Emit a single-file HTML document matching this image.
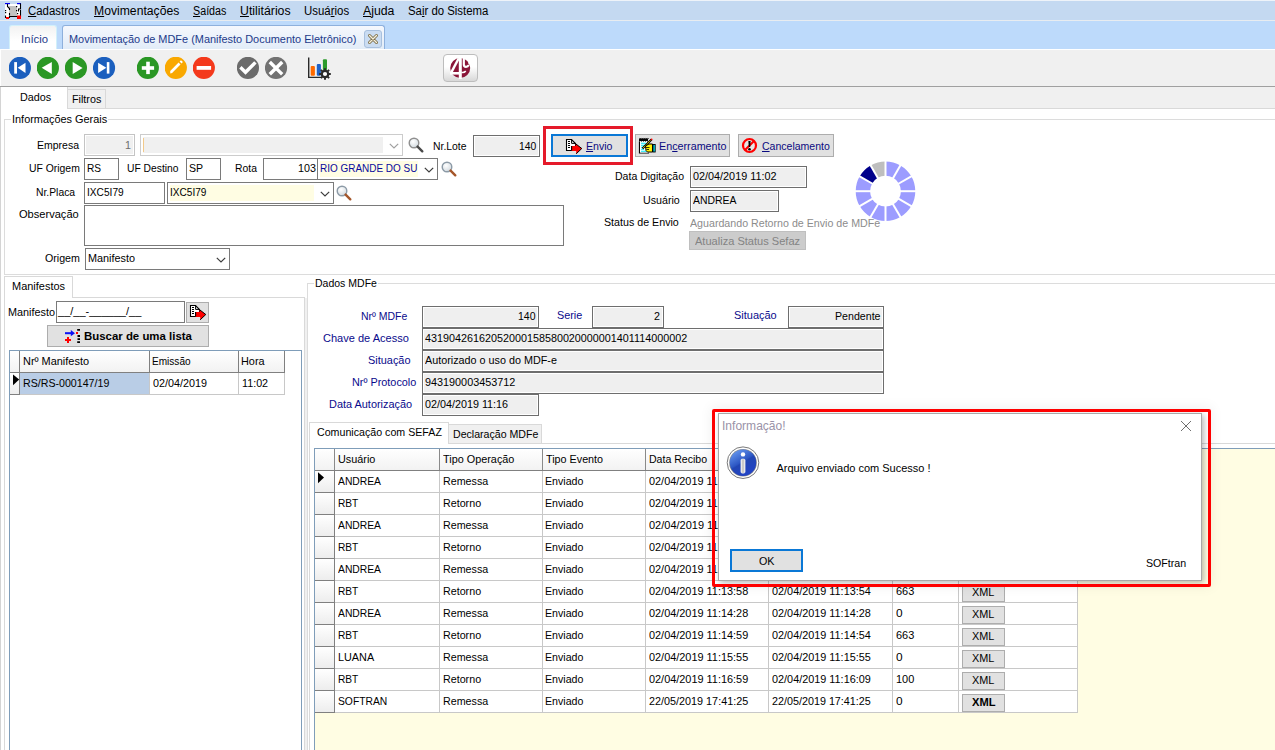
<!DOCTYPE html>
<html><head><meta charset="utf-8"><style>
html,body{margin:0;padding:0;}
body{width:1275px;height:750px;overflow:hidden;position:relative;background:#fff;font-family:"Liberation Sans",sans-serif;}
body>div,body>svg{position:absolute;}
.t{white-space:nowrap;}
</style></head><body>
<div style="left:0px;top:0px;width:1275px;height:750px;background:#fff"></div>
<div style="left:0px;top:0px;width:1275px;height:20px;background:#C4D9F1"></div>
<div style="left:0px;top:0px;width:1275px;height:1px;background:#EEF3F9"></div>
<div style="left:0px;top:20px;width:1275px;height:1px;background:#E8ECF0"></div>
<div style="left:0px;top:21px;width:1275px;height:28px;background:#BDDAFB"></div>
<div style="left:0px;top:49px;width:1275px;height:37px;background:#F0F0F0"></div>
<div style="left:0px;top:49px;width:1275px;height:1px;background:#fff"></div>
<div style="left:0px;top:50px;width:1px;height:36px;background:#fff"></div>
<div style="left:0px;top:86px;width:1275px;height:1px;background:#A0A0A0"></div>
<div style="left:0px;top:87px;width:1275px;height:21px;background:#F0F0F0"></div>
<svg style="position:absolute;left:0px;top:0px;" width="26" height="22" viewBox="0 0 26 22"><rect x="5" y="4" width="16" height="13" fill="#fff"/><rect x="9" y="6" width="8" height="10" fill="#C2C2C2"/><rect x="5" y="3" width="5" height="1.2" fill="#0000F0"/><rect x="17" y="3" width="4" height="1.2" fill="#0000F0"/><path d="M7.5 4 V6.5 L9.5 8.5 V10 M9.5 13 V15.5 M5.5 15.5 V17.5 H9.5 V16.5 H17 M20.5 3.5 V9 H18.5 V11.5 M20.5 10 V16.5 H17.5" stroke="#000" stroke-width="1.1" fill="none"/><rect x="5" y="10" width="1.2" height="1.2" fill="#000"/><rect x="5" y="12" width="1.2" height="1.2" fill="#000"/><rect x="16" y="6" width="1.2" height="1.2" fill="#000"/><rect x="16" y="10" width="1.2" height="1.2" fill="#000"/><rect x="17" y="13" width="1.2" height="1.2" fill="#000"/><rect x="6" y="17" width="3" height="2" fill="#f00"/><rect x="17" y="15.5" width="4" height="3.5" fill="#f00"/></svg>
<div class="t" style="left:27.90px;top:4.00px;font-size:12px;line-height:14px;color:#000;font-weight:normal;font-family:'Liberation Sans', sans-serif;transform:scaleX(0.9508);transform-origin:0 0;"><u>C</u>adastros</div>
<div class="t" style="left:93.60px;top:4.00px;font-size:12px;line-height:14px;color:#000;font-weight:normal;font-family:'Liberation Sans', sans-serif;transform:scaleX(1.0151);transform-origin:0 0;"><u>M</u>ovimentações</div>
<div class="t" style="left:192.60px;top:4.00px;font-size:12px;line-height:14px;color:#000;font-weight:normal;font-family:'Liberation Sans', sans-serif;transform:scaleX(0.8940);transform-origin:0 0;"><u>S</u>aídas</div>
<div class="t" style="left:239.70px;top:4.00px;font-size:12px;line-height:14px;color:#000;font-weight:normal;font-family:'Liberation Sans', sans-serif;transform:scaleX(1.0255);transform-origin:0 0;"><u>U</u>tilitários</div>
<div class="t" style="left:304.00px;top:4.00px;font-size:12px;line-height:14px;color:#000;font-weight:normal;font-family:'Liberation Sans', sans-serif;transform:scaleX(0.9525);transform-origin:0 0;">Usuá<u>r</u>ios</div>
<div class="t" style="left:362.80px;top:4.00px;font-size:12px;line-height:14px;color:#000;font-weight:normal;font-family:'Liberation Sans', sans-serif;transform:scaleX(1.0231);transform-origin:0 0;"><u>A</u>juda</div>
<div class="t" style="left:407.50px;top:4.00px;font-size:12px;line-height:14px;color:#000;font-weight:normal;font-family:'Liberation Sans', sans-serif;transform:scaleX(0.9480);transform-origin:0 0;">Sa<u>i</u>r do Sistema</div>
<div style="left:9px;top:25px;width:48px;height:24px;background:linear-gradient(#F2F2F2,#fff 65%);border:1px solid #D2F0FA;border-bottom:none;border-radius:3px 3px 0 0;box-sizing:border-box"></div>
<div class="t" style="left:20.50px;top:32.00px;font-size:11.5px;line-height:14px;color:#1D3A8A;font-weight:normal;font-family:'Liberation Sans', sans-serif;transform:scaleX(0.9823);transform-origin:0 0;">Início</div>
<div style="left:62px;top:25px;width:323px;height:24px;background:linear-gradient(#F5F8FD,#E2ECF8);border:1px solid #8EB0DC;border-bottom:none;border-radius:3px 3px 0 0;box-sizing:border-box"></div>
<div class="t" style="left:68.50px;top:32.00px;font-size:11.5px;line-height:14px;color:#1D3A8A;font-weight:normal;font-family:'Liberation Sans', sans-serif;transform:scaleX(0.9507);transform-origin:0 0;">Movimentação de MDFe (Manifesto Documento Eletrônico)</div>
<div style="left:364px;top:30px;width:18px;height:18px;background:#CADCF2;border:1px solid #A8C0DE;border-radius:3px;box-sizing:border-box"></div>
<svg style="position:absolute;left:367px;top:33px;" width="12" height="12" viewBox="0 0 12 12"><path d="M2.5 2.5 L9.5 9.5 M9.5 2.5 L2.5 9.5" stroke="#7A6A40" stroke-width="3" stroke-linecap="round"/><path d="M2.5 2.5 L9.5 9.5 M9.5 2.5 L2.5 9.5" stroke="#F4F0E0" stroke-width="1.4" stroke-linecap="round"/></svg>
<svg style="position:absolute;left:9px;top:57px;" width="23" height="23" viewBox="0 0 23 23"><circle cx="10.85" cy="10.9" r="11.1" fill="#1B5FBE"/><rect x="5.2" y="5.1" width="2.8" height="11.5" fill="#fff"/><path d="M16.5 5.8 L8.7 10.85 L16.5 15.9Z" fill="#fff"/></svg>
<svg style="position:absolute;left:37px;top:57px;" width="23" height="23" viewBox="0 0 23 23"><circle cx="10.85" cy="10.9" r="11.1" fill="#2A9724"/><path d="M14.8 4.9 L4.7 10.85 L14.8 16.9Z" fill="#fff"/></svg>
<svg style="position:absolute;left:65px;top:57px;" width="23" height="23" viewBox="0 0 23 23"><circle cx="10.9" cy="10.9" r="11.1" fill="#2A9724"/><path d="M7.7 4.9 L17.6 10.9 L7.7 16.9Z" fill="#fff"/></svg>
<svg style="position:absolute;left:93px;top:57px;" width="23" height="23" viewBox="0 0 23 23"><circle cx="11" cy="10.9" r="11.1" fill="#1B5FBE"/><path d="M5.1 5.8 L13.4 10.85 L5.1 15.9Z" fill="#fff"/><rect x="13.8" y="5.1" width="2.6" height="11.5" fill="#fff"/></svg>
<svg style="position:absolute;left:137px;top:57px;" width="23" height="23" viewBox="0 0 23 23"><circle cx="10.8" cy="10.8" r="11.1" fill="#2A9724"/><rect x="4.8" y="9.2" width="12.3" height="3.6" fill="#fff"/><rect x="9.2" y="4.7" width="3.6" height="12.4" fill="#fff"/></svg>
<svg style="position:absolute;left:165px;top:57px;" width="23" height="23" viewBox="0 0 23 23"><circle cx="10.8" cy="10.8" r="11.1" fill="#F9A800"/><path d="M5.3 16.5 L5.2 14 L13.6 5.6 L15.5 7.5 L7.1 15.9 Z" fill="#fff"/><path d="M14.6 4.6 L15.6 3.6 Q16.2 3.2 16.7 3.7 L17.5 4.5 Q17.9 5 17.5 5.5 L16.5 6.5Z" fill="#fff"/></svg>
<svg style="position:absolute;left:193px;top:57px;" width="23" height="23" viewBox="0 0 23 23"><circle cx="10.8" cy="10.8" r="11.1" fill="#F4391C"/><rect x="3.6" y="9" width="14.5" height="3.8" fill="#fff"/></svg>
<svg style="position:absolute;left:237px;top:57px;" width="23" height="23" viewBox="0 0 23 23"><circle cx="10.9" cy="10.9" r="11.1" fill="#6B6B6B"/><path d="M4.6 11.4 L8.5 15.3 L17.2 6.6" stroke="#fff" stroke-width="3.4" fill="none" stroke-linecap="square"/></svg>
<svg style="position:absolute;left:265px;top:57px;" width="23" height="23" viewBox="0 0 23 23"><circle cx="11" cy="10.9" r="11.1" fill="#727272"/><path d="M6 6.2 L16 16.1 M16 6.2 L6 16.1" stroke="#fff" stroke-width="3.4" stroke-linecap="square"/></svg>
<svg style="position:absolute;left:306px;top:55px;" width="28" height="27" viewBox="0 0 28 27"><path d="M2.7 2.5 V22.4 H15" stroke="#2A2A2A" stroke-width="1.4" fill="none"/><rect x="4.7" y="10.9" width="4.2" height="9.8" rx="1" fill="#FF6A00"/><rect x="10.8" y="9.1" width="4.1" height="11.6" rx="1" fill="#1F62C8"/><rect x="16.9" y="4.2" width="4.1" height="11" rx="1" fill="#2C9B2C"/><g transform="translate(19,19)"><circle r="4.3" fill="#2A2A2A"/><path d="M0 -5.8 V5.8 M-5.8 0 H5.8 M-4.1 -4.1 L4.1 4.1 M4.1 -4.1 L-4.1 4.1" stroke="#2A2A2A" stroke-width="2"/><circle r="2.1" fill="#fff"/></g></svg>
<div style="left:443px;top:54px;width:35px;height:28px;border:1px solid #BDBDBD;border-radius:4px;background:linear-gradient(#fff 0%,#fff 45%,#D8D8D8 100%);box-sizing:border-box"></div>
<svg style="position:absolute;left:450px;top:58px;" width="21" height="21" viewBox="0 0 21 21"><circle cx="10.2" cy="10" r="10" fill="#8A1538"/><path d="M1.2 14.6 L8.8 0.2" stroke="#fff" stroke-width="2.4"/><rect x="0" y="14" width="9.5" height="2.6" fill="#fff"/><rect x="8.8" y="0" width="3" height="21" fill="#fff"/><path d="M13.8 0 V6.5 Q13.8 8.8 16 8.8 Q18 8.8 18.6 7" stroke="#fff" stroke-width="2.2" fill="none"/><path d="M19.2 1.5 V6.5" stroke="#fff" stroke-width="1.6"/><path d="M11.5 14.2 Q13.5 15.2 15.8 13.2" stroke="#fff" stroke-width="1.6" fill="none"/></svg>
<div style="left:0px;top:87px;width:68px;height:22px;background:#fff;border-right:1px solid #D9D9D9;box-sizing:border-box"></div>
<div style="left:68px;top:89px;width:38px;height:20px;background:#F0F0F0;border:1px solid #D9D9D9;border-left:none;box-sizing:border-box"></div>
<div class="t" style="left:19.50px;top:91.00px;font-size:11px;line-height:13px;color:#000;font-weight:normal;font-family:'Liberation Sans', sans-serif;transform:scaleX(0.9812);transform-origin:0 0;">Dados</div>
<div class="t" style="left:71.60px;top:93.00px;font-size:11px;line-height:13px;color:#000;font-weight:normal;font-family:'Liberation Sans', sans-serif;transform:scaleX(0.9784);transform-origin:0 0;">Filtros</div>
<div style="left:67px;top:108px;width:1208px;height:1px;background:#D9D9D9"></div>
<div style="left:0px;top:87px;width:1px;height:663px;background:#D4D4D4"></div>
<div style="left:4px;top:119px;width:1275px;height:156px;border:1px solid #DCDCDC;border-right:none;box-sizing:border-box"></div>
<div style="left:11px;top:114px;width:97px;height:11px;background:#fff"></div>
<div class="t" style="left:11.70px;top:113.00px;font-size:11px;line-height:13px;color:#000;font-weight:normal;font-family:'Liberation Sans', sans-serif;transform:scaleX(0.9918);transform-origin:0 0;">Informações Gerais</div>
<div class="t" style="left:37.00px;top:139.00px;font-size:11px;line-height:13px;color:#000;font-weight:normal;font-family:'Liberation Sans', sans-serif;transform:scaleX(0.9542);transform-origin:0 0;">Empresa</div>
<div style="left:84px;top:134px;width:51px;height:22px;border:1px solid #C4C4C4;background:#F0F0F0;box-shadow:inset 0 0 0 1px #fff;box-sizing:border-box;"></div>
<div class="t" style="left:124.53px;top:139.00px;font-size:11px;line-height:13px;color:#6D6D6D;font-weight:normal;font-family:'Liberation Sans', sans-serif;transform:scaleX(0.9750);transform-origin:0 0;">1</div>
<div style="left:140px;top:134px;width:263px;height:22px;border:1px solid #CCCCCC;background:#fff;box-sizing:border-box"></div>
<div style="left:143px;top:137px;width:240px;height:16px;background:#F0F0F0"></div>
<div style="left:143px;top:138px;width:1px;height:14px;background:#F2C98A"></div>
<svg style="position:absolute;left:389px;top:143px;" width="10" height="6" viewBox="0 0 10 6"><path d="M0.8 0.8 L5 5 L9.2 0.8" stroke="#A0A0A0" stroke-width="1.2" fill="none"/></svg>
<svg style="position:absolute;left:408px;top:137px;" width="16" height="16" viewBox="0 0 16 16"><defs><radialGradient id="mg" cx="40%" cy="35%" r="70%"><stop offset="0" stop-color="#fff"/><stop offset="1" stop-color="#D0D8DE"/></radialGradient></defs><circle cx="6" cy="6" r="4.8" fill="url(#mg)" stroke="#8F8F8F" stroke-width="1.4"/><path d="M9.6 9.6 L14.3 14.3" stroke="#4A4A4A" stroke-width="2.4" stroke-linecap="round"/></svg>
<div class="t" style="left:433.00px;top:140.00px;font-size:11px;line-height:13px;color:#000;font-weight:normal;font-family:'Liberation Sans', sans-serif;transform:scaleX(0.9445);transform-origin:0 0;">Nr.Lote</div>
<div style="left:473px;top:135px;width:67px;height:22px;border:1px solid #6E6E6E;background:#EFEFEF;box-shadow:inset 0 0 0 1px #fff;box-sizing:border-box;"></div>
<div class="t" style="left:518.70px;top:140.00px;font-size:11px;line-height:13px;color:#000;font-weight:normal;font-family:'Liberation Sans', sans-serif;transform:scaleX(0.9425);transform-origin:0 0;">140</div>
<div class="t" style="left:28.90px;top:162.00px;font-size:11px;line-height:13px;color:#000;font-weight:normal;font-family:'Liberation Sans', sans-serif;transform:scaleX(0.9445);transform-origin:0 0;">UF Origem</div>
<div style="left:84px;top:158px;width:35px;height:22px;border:1px solid #7A7A7A;background:#fff;box-sizing:border-box;"></div>
<div class="t" style="left:87.10px;top:162.00px;font-size:11px;line-height:13px;color:#000;font-weight:normal;font-family:'Liberation Sans', sans-serif;transform:scaleX(0.9227);transform-origin:0 0;">RS</div>
<div class="t" style="left:127.00px;top:162.00px;font-size:11px;line-height:13px;color:#000;font-weight:normal;font-family:'Liberation Sans', sans-serif;transform:scaleX(0.9360);transform-origin:0 0;">UF Destino</div>
<div style="left:186px;top:158px;width:35px;height:22px;border:1px solid #7A7A7A;background:#fff;box-sizing:border-box;"></div>
<div class="t" style="left:188.80px;top:162.00px;font-size:11px;line-height:13px;color:#000;font-weight:normal;font-family:'Liberation Sans', sans-serif;transform:scaleX(0.9609);transform-origin:0 0;">SP</div>
<div class="t" style="left:234.90px;top:162.00px;font-size:11px;line-height:13px;color:#000;font-weight:normal;font-family:'Liberation Sans', sans-serif;transform:scaleX(0.9425);transform-origin:0 0;">Rota</div>
<div style="left:263px;top:158px;width:55px;height:22px;border:1px solid #7A7A7A;background:#fff;box-sizing:border-box;"></div>
<div class="t" style="left:298.20px;top:162.00px;font-size:11px;line-height:13px;color:#000;font-weight:normal;font-family:'Liberation Sans', sans-serif;transform:scaleX(0.9752);transform-origin:0 0;">103</div>
<div style="left:317px;top:158px;width:121px;height:22px;border:1px solid #7A7A7A;background:#fff;box-sizing:border-box;"></div>
<div style="left:320px;top:161px;width:98px;height:16px;background:#FFFDE3"></div>
<div class="t" style="left:320.20px;top:162.00px;font-size:11px;line-height:13px;color:#0A0A9C;font-weight:normal;font-family:'Liberation Sans', sans-serif;transform:scaleX(0.9054);transform-origin:0 0;">RIO GRANDE DO SU</div>
<svg style="position:absolute;left:424px;top:167px;" width="10" height="6" viewBox="0 0 10 6"><path d="M0.8 0.8 L5 5 L9.2 0.8" stroke="#3C3C3C" stroke-width="1.2" fill="none"/></svg>
<svg style="position:absolute;left:441px;top:161px;" width="16" height="16" viewBox="0 0 16 16"><defs><radialGradient id="mg" cx="40%" cy="35%" r="70%"><stop offset="0" stop-color="#fff"/><stop offset="1" stop-color="#D0D8DE"/></radialGradient></defs><circle cx="6" cy="6" r="4.8" fill="url(#mg)" stroke="#8C9AA6" stroke-width="1.4"/><path d="M9.6 9.6 L14.3 14.3" stroke="#A5562A" stroke-width="2.4" stroke-linecap="round"/></svg>
<div class="t" style="left:36.00px;top:186.00px;font-size:11px;line-height:13px;color:#000;font-weight:normal;font-family:'Liberation Sans', sans-serif;transform:scaleX(0.9405);transform-origin:0 0;">Nr.Placa</div>
<div style="left:84px;top:182px;width:81px;height:22px;border:1px solid #7A7A7A;background:#fff;box-sizing:border-box;"></div>
<div class="t" style="left:87.10px;top:186.00px;font-size:11px;line-height:13px;color:#000;font-weight:normal;font-family:'Liberation Sans', sans-serif;transform:scaleX(0.9233);transform-origin:0 0;">IXC5I79</div>
<div style="left:167px;top:182px;width:167px;height:22px;border:1px solid #7A7A7A;background:#fff;box-sizing:border-box;"></div>
<div style="left:170px;top:185px;width:144px;height:16px;background:#FFFDE3"></div>
<div class="t" style="left:169.90px;top:186.00px;font-size:11px;line-height:13px;color:#000;font-weight:normal;font-family:'Liberation Sans', sans-serif;transform:scaleX(0.9157);transform-origin:0 0;">IXC5I79</div>
<svg style="position:absolute;left:320px;top:191px;" width="10" height="6" viewBox="0 0 10 6"><path d="M0.8 0.8 L5 5 L9.2 0.8" stroke="#3C3C3C" stroke-width="1.2" fill="none"/></svg>
<svg style="position:absolute;left:336px;top:185px;" width="16" height="16" viewBox="0 0 16 16"><defs><radialGradient id="mg" cx="40%" cy="35%" r="70%"><stop offset="0" stop-color="#fff"/><stop offset="1" stop-color="#D0D8DE"/></radialGradient></defs><circle cx="6" cy="6" r="4.8" fill="url(#mg)" stroke="#8C9AA6" stroke-width="1.4"/><path d="M9.6 9.6 L14.3 14.3" stroke="#A5562A" stroke-width="2.4" stroke-linecap="round"/></svg>
<div class="t" style="left:19.30px;top:208.00px;font-size:11px;line-height:13px;color:#000;font-weight:normal;font-family:'Liberation Sans', sans-serif;transform:scaleX(1.0066);transform-origin:0 0;">Observação</div>
<div style="left:84px;top:205px;width:480px;height:41px;border:1px solid #7A7A7A;background:#fff;box-sizing:border-box;"></div>
<div class="t" style="left:44.80px;top:252.00px;font-size:11px;line-height:13px;color:#000;font-weight:normal;font-family:'Liberation Sans', sans-serif;transform:scaleX(0.9677);transform-origin:0 0;">Origem</div>
<div style="left:85px;top:248px;width:145px;height:22px;border:1px solid #7A7A7A;background:#fff;box-sizing:border-box;"></div>
<div class="t" style="left:87.90px;top:252.00px;font-size:11px;line-height:13px;color:#000;font-weight:normal;font-family:'Liberation Sans', sans-serif;transform:scaleX(0.9855);transform-origin:0 0;">Manifesto</div>
<svg style="position:absolute;left:216px;top:257px;" width="10" height="6" viewBox="0 0 10 6"><path d="M0.8 0.8 L5 5 L9.2 0.8" stroke="#3C3C3C" stroke-width="1.2" fill="none"/></svg>
<div style="left:543px;top:126px;width:90px;height:39px;border:3px solid #E51A2A;box-sizing:border-box"></div>
<div style="left:551px;top:134px;width:77px;height:23px;border:2px solid #0A78D6;background:#E1E1E1;box-sizing:border-box"></div>
<svg style="position:absolute;left:560px;top:136px;" width="24" height="20" viewBox="0 0 24 20"><path d="M6.5 3.5 H11.5 L15.5 7.5 V14.5 H6.5 Z" fill="#fff" stroke="#000" stroke-width="1.1"/><path d="M11.6 3.3 V7.4 H15.3" stroke="#000" stroke-width="1" fill="none"/><path d="M8 5.5 h2 M8 7.5 h2 M8 9.5 h2 M8 11.5 h2" stroke="#000" stroke-width="1"/><path d="M11.2 10 H15.7 V7.8 L21.8 12.5 L16.2 17.8 V15 H11.2 Z" fill="#f00"/><path d="M15.7 7.8 L21.8 12.5 L16.2 17.8" stroke="#000" stroke-width="1" fill="none"/><path d="M6.5 14.5 H11.2 M11.6 10 V14.5" stroke="#000" stroke-width="1.1"/></svg>
<div class="t" style="left:585.50px;top:140.00px;font-size:11px;line-height:13px;color:#0A0A80;font-weight:normal;font-family:'Liberation Sans', sans-serif;transform:scaleX(0.9630);transform-origin:0 0;"><u>E</u>nvio</div>
<div style="left:635px;top:134px;width:95px;height:23px;border:1px solid #ADADAD;background:#E1E1E1;box-sizing:border-box"></div>
<svg style="position:absolute;left:636px;top:136px;" width="22" height="20" viewBox="0 0 22 20"><path d="M3.5 5.5 V17 H13" stroke="#000" stroke-width="1.2" fill="none"/><rect x="4" y="5.5" width="8.5" height="11" fill="#fff"/><path d="M5 7.2 h5 M5 9.2 h4 M5 11.3 h3 M5 13.3 h3 M5 15.3 h6" stroke="#00E8F8" stroke-width="1.1"/><path d="M3.5 5.5 V3 Q3.5 2 4.5 2.5 V5 M5.5 5.5 V3 Q5.5 2 6.5 2.5 V5 M7.5 5.5 V3 Q7.5 2 8.5 2.5 V5 M9.5 5.5 V3 Q9.5 2 10.5 2.5 V5 M11.5 5.5 V3 Q11.5 2 12.5 2.5" stroke="#000" stroke-width="1" fill="none"/><path d="M6.5 12.5 L15.5 3.5" stroke="#000" stroke-width="2.2"/><path d="M7 12 L15 4" stroke="#FFF000" stroke-width="1" stroke-dasharray="1 0.8"/><circle cx="15.6" cy="3.4" r="0.9" fill="#f00"/><path d="M9.5 10 L13 8 H16.5 V16 H11.5 L10 14.5 Z" fill="#FFF000" stroke="#000" stroke-width="1"/><path d="M10 11.5 H13.5 M10.5 13.5 H13" stroke="#000" stroke-width="0.8"/><rect x="17" y="8.5" width="2.2" height="7.5" fill="#00E8F8" stroke="#000" stroke-width="0.9"/></svg>
<div class="t" style="left:658.70px;top:140.00px;font-size:11px;line-height:13px;color:#0A0A80;font-weight:normal;font-family:'Liberation Sans', sans-serif;transform:scaleX(0.9770);transform-origin:0 0;">En<u>c</u>erramento</div>
<div style="left:738px;top:134px;width:96px;height:23px;border:1px solid #ADADAD;background:#E1E1E1;box-sizing:border-box"></div>
<svg style="position:absolute;left:741px;top:137px;" width="17" height="17" viewBox="0 0 17 17"><circle cx="8.5" cy="8.5" r="6.5" fill="#E6E6E6" stroke="#f00" stroke-width="2.2"/><path d="M4 13 L13 4" stroke="#f00" stroke-width="2.2"/><path d="M7.4 4 h2.2 l-0.4 6 h-1.4Z" fill="#000"/><circle cx="8.5" cy="12.2" r="1.3" fill="#000"/></svg>
<div class="t" style="left:761.90px;top:140.00px;font-size:11px;line-height:13px;color:#0A0A80;font-weight:normal;font-family:'Liberation Sans', sans-serif;transform:scaleX(0.9558);transform-origin:0 0;"><u>C</u>ancelamento</div>
<div class="t" style="left:614.90px;top:170.00px;font-size:11px;line-height:13px;color:#000;font-weight:normal;font-family:'Liberation Sans', sans-serif;transform:scaleX(0.9576);transform-origin:0 0;">Data Digitação</div>
<div style="left:690px;top:166px;width:117px;height:22px;border:1px solid #6E6E6E;background:#EFEFEF;box-shadow:inset 0 0 0 1px #fff;box-sizing:border-box;"></div>
<div class="t" style="left:693.00px;top:170.00px;font-size:11px;line-height:13px;color:#000;font-weight:normal;font-family:'Liberation Sans', sans-serif;transform:scaleX(0.9843);transform-origin:0 0;">02/04/2019 11:02</div>
<div class="t" style="left:643.20px;top:194.00px;font-size:11px;line-height:13px;color:#000;font-weight:normal;font-family:'Liberation Sans', sans-serif;transform:scaleX(0.9708);transform-origin:0 0;">Usuário</div>
<div style="left:690px;top:190px;width:89px;height:22px;border:1px solid #6E6E6E;background:#EFEFEF;box-shadow:inset 0 0 0 1px #fff;box-sizing:border-box;"></div>
<div class="t" style="left:692.70px;top:194.00px;font-size:11px;line-height:13px;color:#000;font-weight:normal;font-family:'Liberation Sans', sans-serif;transform:scaleX(0.9467);transform-origin:0 0;">ANDREA</div>
<div class="t" style="left:604.20px;top:216.00px;font-size:11px;line-height:13px;color:#000;font-weight:normal;font-family:'Liberation Sans', sans-serif;transform:scaleX(0.9708);transform-origin:0 0;">Status de Envio</div>
<div class="t" style="left:689.80px;top:217.00px;font-size:11px;line-height:13px;color:#8C8C8C;font-weight:normal;font-family:'Liberation Sans', sans-serif;transform:scaleX(0.9689);transform-origin:0 0;">Aguardando Retorno de Envio de MDFe</div>
<div style="left:689px;top:231px;width:117px;height:19px;border:1px solid #BFBFBF;background:#CCCCCC;box-sizing:border-box"></div>
<div class="t" style="left:695.00px;top:235.00px;font-size:11px;line-height:13px;color:#838383;font-weight:normal;font-family:'Liberation Sans', sans-serif;transform:scaleX(1.0051);transform-origin:0 0;">Atualiza Status Sefaz</div>
<svg style="position:absolute;left:855px;top:161px;" width="61" height="61" viewBox="0 0 61 61"><path d="M30.50 0.40 A29.8 29.8 0 0 1 45.40 4.39 L38.20 16.86 A15.4 15.4 0 0 0 30.50 14.80Z" fill="#9C9CFF"/><path d="M45.40 4.39 A29.8 29.8 0 0 1 56.31 15.30 L43.84 22.50 A15.4 15.4 0 0 0 38.20 16.86Z" fill="#9C9CFF"/><path d="M56.31 15.30 A29.8 29.8 0 0 1 60.30 30.20 L45.90 30.20 A15.4 15.4 0 0 0 43.84 22.50Z" fill="#9C9CFF"/><path d="M60.30 30.20 A29.8 29.8 0 0 1 56.31 45.10 L43.84 37.90 A15.4 15.4 0 0 0 45.90 30.20Z" fill="#9C9CFF"/><path d="M56.31 45.10 A29.8 29.8 0 0 1 45.40 56.01 L38.20 43.54 A15.4 15.4 0 0 0 43.84 37.90Z" fill="#9C9CFF"/><path d="M45.40 56.01 A29.8 29.8 0 0 1 30.50 60.00 L30.50 45.60 A15.4 15.4 0 0 0 38.20 43.54Z" fill="#9C9CFF"/><path d="M30.50 60.00 A29.8 29.8 0 0 1 15.60 56.01 L22.80 43.54 A15.4 15.4 0 0 0 30.50 45.60Z" fill="#9C9CFF"/><path d="M15.60 56.01 A29.8 29.8 0 0 1 4.69 45.10 L17.16 37.90 A15.4 15.4 0 0 0 22.80 43.54Z" fill="#9C9CFF"/><path d="M4.69 45.10 A29.8 29.8 0 0 1 0.70 30.20 L15.10 30.20 A15.4 15.4 0 0 0 17.16 37.90Z" fill="#9C9CFF"/><path d="M0.70 30.20 A29.8 29.8 0 0 1 4.69 15.30 L17.16 22.50 A15.4 15.4 0 0 0 15.10 30.20Z" fill="#9C9CFF"/><path d="M4.69 15.30 A29.8 29.8 0 0 1 15.60 4.39 L22.80 16.86 A15.4 15.4 0 0 0 17.16 22.50Z" fill="#00008B"/><path d="M15.60 4.39 A29.8 29.8 0 0 1 30.50 0.40 L30.50 14.80 A15.4 15.4 0 0 0 22.80 16.86Z" fill="#BEBEBE"/><path d="M30.50 15.80 L30.50 -0.60" stroke="#fff" stroke-width="2"/><path d="M37.70 17.73 L45.90 3.53" stroke="#fff" stroke-width="2"/><path d="M42.97 23.00 L57.17 14.80" stroke="#fff" stroke-width="2"/><path d="M44.90 30.20 L61.30 30.20" stroke="#fff" stroke-width="2"/><path d="M42.97 37.40 L57.17 45.60" stroke="#fff" stroke-width="2"/><path d="M37.70 42.67 L45.90 56.87" stroke="#fff" stroke-width="2"/><path d="M30.50 44.60 L30.50 61.00" stroke="#fff" stroke-width="2"/><path d="M23.30 42.67 L15.10 56.87" stroke="#fff" stroke-width="2"/><path d="M18.03 37.40 L3.83 45.60" stroke="#fff" stroke-width="2"/><path d="M16.10 30.20 L-0.30 30.20" stroke="#fff" stroke-width="2"/><path d="M18.03 23.00 L3.83 14.80" stroke="#fff" stroke-width="2"/><path d="M23.30 17.73 L15.10 3.53" stroke="#fff" stroke-width="2"/></svg>
<div style="left:4px;top:297px;width:1px;height:453px;background:#D9D9D9"></div>
<div style="left:4px;top:297px;width:301px;height:1px;background:#D9D9D9"></div>
<div style="left:304px;top:297px;width:1px;height:453px;background:#D9D9D9"></div>
<div style="left:4px;top:276px;width:69px;height:22px;border:1px solid #D9D9D9;border-bottom:none;background:#fff;box-sizing:border-box"></div>
<div class="t" style="left:12.00px;top:280.00px;font-size:11px;line-height:13px;color:#000;font-weight:normal;font-family:'Liberation Sans', sans-serif;transform:scaleX(0.9964);transform-origin:0 0;">Manifestos</div>
<div class="t" style="left:7.80px;top:306.00px;font-size:11px;line-height:13px;color:#000;font-weight:normal;font-family:'Liberation Sans', sans-serif;transform:scaleX(0.9834);transform-origin:0 0;">Manifesto</div>
<div style="left:56px;top:301px;width:129px;height:22px;border:1px solid #7A7A7A;background:#fff;box-sizing:border-box;"></div>
<div class="t" style="left:58.40px;top:305.00px;font-size:11px;line-height:13px;color:#000;font-weight:normal;font-family:'Liberation Sans', sans-serif;transform:scaleX(1.0013);transform-origin:0 0;">__/__-______/__</div>
<div style="left:186px;top:302px;width:23px;height:21px;border:1px solid #ADADAD;background:#E1E1E1;box-sizing:border-box"></div>
<svg style="position:absolute;left:184px;top:302px;" width="24" height="20" viewBox="0 0 24 20"><path d="M6.5 3.5 H11.5 L15.5 7.5 V14.5 H6.5 Z" fill="#fff" stroke="#000" stroke-width="1.1"/><path d="M11.6 3.3 V7.4 H15.3" stroke="#000" stroke-width="1" fill="none"/><path d="M8 5.5 h2 M8 7.5 h2 M8 9.5 h2 M8 11.5 h2" stroke="#000" stroke-width="1"/><path d="M11.2 10 H15.7 V7.8 L21.8 12.5 L16.2 17.8 V15 H11.2 Z" fill="#f00"/><path d="M15.7 7.8 L21.8 12.5 L16.2 17.8" stroke="#000" stroke-width="1" fill="none"/><path d="M6.5 14.5 H11.2 M11.6 10 V14.5" stroke="#000" stroke-width="1.1"/></svg>
<div style="left:47px;top:325px;width:162px;height:22px;border:1px solid #ADADAD;background:#E1E1E1;box-sizing:border-box"></div>
<svg style="position:absolute;left:64px;top:328px;" width="17" height="17" viewBox="0 0 17 17"><rect x="1" y="4.2" width="7" height="2" fill="#0A10F5"/><path d="M6.8 2 L11 5.2 L6.8 8.2Z" fill="#0A10F5"/><rect x="12" y="4" width="2" height="2" fill="#f00"/><path d="M13.2 1.9 h2.8 M13.5 8 h2.5 M13.5 11.1 h2.5 M13.2 14.2 h2.8" stroke="#000" stroke-width="1.8"/><rect x="1" y="11" width="6" height="2" fill="#f00"/><rect x="3" y="9" width="2" height="6" fill="#f00"/></svg>
<div class="t" style="left:84.10px;top:330.00px;font-size:11px;line-height:13px;color:#000;font-weight:bold;font-family:'Liberation Sans', sans-serif;transform:scaleX(1.0381);transform-origin:0 0;">Buscar de uma lista</div>
<div style="left:9px;top:350px;width:293px;height:400px;border:1px solid #7F9DB9;border-bottom:none;background:#fff;box-sizing:border-box"></div>
<div style="left:10px;top:351px;width:275px;height:21px;background:linear-gradient(#fff,#F2F2F2)"></div>
<div style="left:10px;top:372px;width:275px;height:1px;background:#808080"></div>
<div style="left:19px;top:351px;width:1px;height:44px;background:#808080"></div>
<div style="left:149px;top:351px;width:1px;height:21px;background:#808080"></div>
<div style="left:238px;top:351px;width:1px;height:21px;background:#808080"></div>
<div style="left:284px;top:351px;width:1px;height:22px;background:#808080"></div>
<div style="left:10px;top:373px;width:9px;height:21px;background:linear-gradient(#fff,#EDEDED)"></div>
<div style="left:10px;top:394px;width:10px;height:1px;background:#808080"></div>
<div style="left:20px;top:394px;width:265px;height:1px;background:#C8C8C8"></div>
<div style="left:284px;top:373px;width:1px;height:22px;background:#C8C8C8"></div>
<div style="left:20px;top:373px;width:129px;height:21px;background:#B9CDE6"></div>
<div style="left:149px;top:373px;width:1px;height:21px;background:#C8C8C8"></div>
<div style="left:238px;top:373px;width:1px;height:21px;background:#C8C8C8"></div>
<svg style="position:absolute;left:12px;top:374px;" width="8" height="12" viewBox="0 0 8 12"><path d="M1 0.5 L7.2 5.6 L1 11.2Z" fill="#000"/></svg>
<div class="t" style="left:22.90px;top:355.00px;font-size:11px;line-height:13px;color:#000;font-weight:normal;font-family:'Liberation Sans', sans-serif;transform:scaleX(0.9944);transform-origin:0 0;">Nrº Manifesto</div>
<div class="t" style="left:152.00px;top:355.00px;font-size:11px;line-height:13px;color:#000;font-weight:normal;font-family:'Liberation Sans', sans-serif;transform:scaleX(0.9151);transform-origin:0 0;">Emissão</div>
<div class="t" style="left:241.20px;top:355.00px;font-size:11px;line-height:13px;color:#000;font-weight:normal;font-family:'Liberation Sans', sans-serif;transform:scaleX(0.9898);transform-origin:0 0;">Hora</div>
<div class="t" style="left:22.90px;top:377.00px;font-size:11px;line-height:13px;color:#000;font-weight:normal;font-family:'Liberation Sans', sans-serif;transform:scaleX(0.9666);transform-origin:0 0;">RS/RS-000147/19</div>
<div class="t" style="left:152.90px;top:377.00px;font-size:11px;line-height:13px;color:#000;font-weight:normal;font-family:'Liberation Sans', sans-serif;transform:scaleX(0.9808);transform-origin:0 0;">02/04/2019</div>
<div class="t" style="left:242.20px;top:377.00px;font-size:11px;line-height:13px;color:#000;font-weight:normal;font-family:'Liberation Sans', sans-serif;transform:scaleX(0.9771);transform-origin:0 0;">11:02</div>
<div style="left:307px;top:283px;width:1000px;height:500px;border:1px solid #DCDCDC;border-right:none;border-bottom:none;box-sizing:border-box"></div>
<div style="left:314px;top:278px;width:64px;height:11px;background:#fff"></div>
<div style="left:305px;top:298px;width:2px;height:452px;background:#F0F0F0"></div>
<div class="t" style="left:314.50px;top:277.00px;font-size:11px;line-height:13px;color:#000;font-weight:normal;font-family:'Liberation Sans', sans-serif;transform:scaleX(0.9552);transform-origin:0 0;">Dados MDFe</div>
<div class="t" style="left:361.00px;top:310.00px;font-size:11px;line-height:13px;color:#0A0A8C;font-weight:normal;font-family:'Liberation Sans', sans-serif;transform:scaleX(0.9521);transform-origin:0 0;">Nrº MDFe</div>
<div class="t" style="left:323.10px;top:332.00px;font-size:11px;line-height:13px;color:#0A0A8C;font-weight:normal;font-family:'Liberation Sans', sans-serif;transform:scaleX(1.0033);transform-origin:0 0;">Chave de Acesso</div>
<div class="t" style="left:367.80px;top:354.00px;font-size:11px;line-height:13px;color:#0A0A8C;font-weight:normal;font-family:'Liberation Sans', sans-serif;transform:scaleX(0.9927);transform-origin:0 0;">Situação</div>
<div class="t" style="left:351.80px;top:376.00px;font-size:11px;line-height:13px;color:#0A0A8C;font-weight:normal;font-family:'Liberation Sans', sans-serif;transform:scaleX(0.9869);transform-origin:0 0;">Nrº Protocolo</div>
<div class="t" style="left:329.10px;top:398.00px;font-size:11px;line-height:13px;color:#0A0A8C;font-weight:normal;font-family:'Liberation Sans', sans-serif;transform:scaleX(0.9931);transform-origin:0 0;">Data Autorização</div>
<div class="t" style="left:556.90px;top:309.00px;font-size:11px;line-height:13px;color:#0A0A8C;font-weight:normal;font-family:'Liberation Sans', sans-serif;transform:scaleX(0.9852);transform-origin:0 0;">Serie</div>
<div class="t" style="left:733.60px;top:309.00px;font-size:11px;line-height:13px;color:#0A0A8C;font-weight:normal;font-family:'Liberation Sans', sans-serif;transform:scaleX(0.9974);transform-origin:0 0;">Situação</div>
<div style="left:422px;top:306px;width:117px;height:22px;border:1px solid #6E6E6E;background:#EFEFEF;box-shadow:inset 0 0 0 1px #fff;box-sizing:border-box;"></div>
<div style="left:592px;top:306px;width:72px;height:22px;border:1px solid #6E6E6E;background:#EFEFEF;box-shadow:inset 0 0 0 1px #fff;box-sizing:border-box;"></div>
<div style="left:788px;top:306px;width:96px;height:22px;border:1px solid #6E6E6E;background:#EFEFEF;box-shadow:inset 0 0 0 1px #fff;box-sizing:border-box;"></div>
<div style="left:422px;top:328px;width:462px;height:22px;border:1px solid #6E6E6E;background:#EFEFEF;box-shadow:inset 0 0 0 1px #fff;box-sizing:border-box;"></div>
<div style="left:422px;top:350px;width:462px;height:22px;border:1px solid #6E6E6E;background:#EFEFEF;box-shadow:inset 0 0 0 1px #fff;box-sizing:border-box;"></div>
<div style="left:422px;top:372px;width:462px;height:22px;border:1px solid #6E6E6E;background:#EFEFEF;box-shadow:inset 0 0 0 1px #fff;box-sizing:border-box;"></div>
<div style="left:422px;top:394px;width:117px;height:22px;border:1px solid #6E6E6E;background:#EFEFEF;box-shadow:inset 0 0 0 1px #fff;box-sizing:border-box;"></div>
<div class="t" style="left:517.50px;top:310.00px;font-size:11px;line-height:13px;color:#000;font-weight:normal;font-family:'Liberation Sans', sans-serif;transform:scaleX(0.9534);transform-origin:0 0;">140</div>
<div class="t" style="left:654.43px;top:310.00px;font-size:11px;line-height:13px;color:#000;font-weight:normal;font-family:'Liberation Sans', sans-serif;transform:scaleX(0.9750);transform-origin:0 0;">2</div>
<div class="t" style="left:834.60px;top:310.00px;font-size:11px;line-height:13px;color:#000;font-weight:normal;font-family:'Liberation Sans', sans-serif;transform:scaleX(0.9660);transform-origin:0 0;">Pendente</div>
<div class="t" style="left:425.00px;top:332.00px;font-size:11px;line-height:13px;color:#000;font-weight:normal;font-family:'Liberation Sans', sans-serif;transform:scaleX(0.9799);transform-origin:0 0;">43190426162052000158580020000001401114000002</div>
<div class="t" style="left:425.00px;top:354.00px;font-size:11px;line-height:13px;color:#000;font-weight:normal;font-family:'Liberation Sans', sans-serif;transform:scaleX(0.9805);transform-origin:0 0;">Autorizado o uso do MDF-e</div>
<div class="t" style="left:425.00px;top:376.00px;font-size:11px;line-height:13px;color:#000;font-weight:normal;font-family:'Liberation Sans', sans-serif;transform:scaleX(0.9840);transform-origin:0 0;">943190003453712</div>
<div class="t" style="left:425.00px;top:398.00px;font-size:11px;line-height:13px;color:#000;font-weight:normal;font-family:'Liberation Sans', sans-serif;transform:scaleX(0.9796);transform-origin:0 0;">02/04/2019 11:16</div>
<div style="left:309px;top:422px;width:140px;height:22px;border:1px solid #D9D9D9;border-bottom:none;background:#fff;box-sizing:border-box"></div>
<div style="left:448px;top:424px;width:94px;height:20px;border:1px solid #D9D9D9;border-bottom:none;background:#F0F0F0;box-sizing:border-box"></div>
<div style="left:449px;top:443px;width:826px;height:1px;background:#D9D9D9"></div>
<div style="left:309px;top:443px;width:1px;height:307px;background:#D9D9D9"></div>
<div class="t" style="left:316.80px;top:426.00px;font-size:11px;line-height:13px;color:#000;font-weight:normal;font-family:'Liberation Sans', sans-serif;transform:scaleX(0.9682);transform-origin:0 0;">Comunicação com SEFAZ</div>
<div class="t" style="left:452.60px;top:428.00px;font-size:11px;line-height:13px;color:#000;font-weight:normal;font-family:'Liberation Sans', sans-serif;transform:scaleX(0.9634);transform-origin:0 0;">Declaração MDFe</div>
<div style="left:314px;top:448px;width:961px;height:302px;border-top:1px solid #7F9DB9;border-left:1px solid #7F9DB9;background:#FFFDE3;box-sizing:border-box"></div>
<div style="left:315px;top:449px;width:763px;height:21px;background:linear-gradient(#fff,#F2F2F2)"></div>
<div style="left:315px;top:470px;width:763px;height:1px;background:#808080"></div>
<div style="left:334px;top:449px;width:1px;height:21px;background:#8A8A8A"></div>
<div style="left:439px;top:449px;width:1px;height:21px;background:#8A8A8A"></div>
<div style="left:542px;top:449px;width:1px;height:21px;background:#8A8A8A"></div>
<div style="left:645px;top:449px;width:1px;height:21px;background:#8A8A8A"></div>
<div style="left:768px;top:449px;width:1px;height:21px;background:#8A8A8A"></div>
<div style="left:892px;top:449px;width:1px;height:21px;background:#8A8A8A"></div>
<div style="left:958px;top:449px;width:1px;height:21px;background:#8A8A8A"></div>
<div style="left:1077px;top:449px;width:1px;height:21px;background:#8A8A8A"></div>
<div style="left:335px;top:471px;width:743px;height:21px;background:#fff"></div>
<div style="left:315px;top:471px;width:19px;height:21px;background:linear-gradient(#fff,#EDEDED)"></div>
<div style="left:335px;top:492px;width:743px;height:1px;background:#C8C8C8"></div>
<div style="left:315px;top:492px;width:20px;height:1px;background:#808080"></div>
<div style="left:334px;top:471px;width:1px;height:22px;background:#808080"></div>
<div style="left:439px;top:471px;width:1px;height:22px;background:#C8C8C8"></div>
<div style="left:542px;top:471px;width:1px;height:22px;background:#C8C8C8"></div>
<div style="left:645px;top:471px;width:1px;height:22px;background:#C8C8C8"></div>
<div style="left:768px;top:471px;width:1px;height:22px;background:#C8C8C8"></div>
<div style="left:892px;top:471px;width:1px;height:22px;background:#C8C8C8"></div>
<div style="left:958px;top:471px;width:1px;height:22px;background:#C8C8C8"></div>
<div style="left:1077px;top:471px;width:1px;height:22px;background:#C8C8C8"></div>
<div class="t" style="left:337.80px;top:475.00px;font-size:11px;line-height:13px;color:#000;font-weight:normal;font-family:'Liberation Sans', sans-serif;transform:scaleX(0.9380);transform-origin:0 0;">ANDREA</div>
<div class="t" style="left:442.80px;top:475.00px;font-size:11px;line-height:13px;color:#000;font-weight:normal;font-family:'Liberation Sans', sans-serif;transform:scaleX(0.9728);transform-origin:0 0;">Remessa</div>
<div class="t" style="left:545.30px;top:475.00px;font-size:11px;line-height:13px;color:#000;font-weight:normal;font-family:'Liberation Sans', sans-serif;transform:scaleX(0.9659);transform-origin:0 0;">Enviado</div>
<div class="t" style="left:648.80px;top:475.00px;font-size:11px;line-height:13px;color:#000;font-weight:normal;font-family:'Liberation Sans', sans-serif;transform:scaleX(0.9908);transform-origin:0 0;">02/04/2019 11:10:00</div>
<div class="t" style="left:772.00px;top:475.00px;font-size:11px;line-height:13px;color:#000;font-weight:normal;font-family:'Liberation Sans', sans-serif;transform:scaleX(0.9868);transform-origin:0 0;">02/04/2019 11:10:00</div>
<div style="left:962px;top:474px;width:43px;height:18px;border:1px solid #ADADAD;background:#E1E1E1;box-sizing:border-box"></div>
<div class="t" style="left:972.15px;top:476.00px;font-size:11px;line-height:13px;color:#000;font-weight:normal;font-family:'Liberation Sans', sans-serif;transform:scaleX(0.9859);transform-origin:0 0;">XML</div>
<div style="left:335px;top:493px;width:743px;height:21px;background:#fff"></div>
<div style="left:315px;top:493px;width:19px;height:21px;background:linear-gradient(#fff,#EDEDED)"></div>
<div style="left:335px;top:514px;width:743px;height:1px;background:#C8C8C8"></div>
<div style="left:315px;top:514px;width:20px;height:1px;background:#808080"></div>
<div style="left:334px;top:493px;width:1px;height:22px;background:#808080"></div>
<div style="left:439px;top:493px;width:1px;height:22px;background:#C8C8C8"></div>
<div style="left:542px;top:493px;width:1px;height:22px;background:#C8C8C8"></div>
<div style="left:645px;top:493px;width:1px;height:22px;background:#C8C8C8"></div>
<div style="left:768px;top:493px;width:1px;height:22px;background:#C8C8C8"></div>
<div style="left:892px;top:493px;width:1px;height:22px;background:#C8C8C8"></div>
<div style="left:958px;top:493px;width:1px;height:22px;background:#C8C8C8"></div>
<div style="left:1077px;top:493px;width:1px;height:22px;background:#C8C8C8"></div>
<div class="t" style="left:337.80px;top:497.00px;font-size:11px;line-height:13px;color:#000;font-weight:normal;font-family:'Liberation Sans', sans-serif;transform:scaleX(0.9227);transform-origin:0 0;">RBT</div>
<div class="t" style="left:442.80px;top:497.00px;font-size:11px;line-height:13px;color:#000;font-weight:normal;font-family:'Liberation Sans', sans-serif;transform:scaleX(0.9735);transform-origin:0 0;">Retorno</div>
<div class="t" style="left:545.30px;top:497.00px;font-size:11px;line-height:13px;color:#000;font-weight:normal;font-family:'Liberation Sans', sans-serif;transform:scaleX(0.9659);transform-origin:0 0;">Enviado</div>
<div class="t" style="left:648.80px;top:497.00px;font-size:11px;line-height:13px;color:#000;font-weight:normal;font-family:'Liberation Sans', sans-serif;transform:scaleX(0.9908);transform-origin:0 0;">02/04/2019 11:10:30</div>
<div class="t" style="left:772.00px;top:497.00px;font-size:11px;line-height:13px;color:#000;font-weight:normal;font-family:'Liberation Sans', sans-serif;transform:scaleX(0.9868);transform-origin:0 0;">02/04/2019 11:10:30</div>
<div style="left:962px;top:496px;width:43px;height:18px;border:1px solid #ADADAD;background:#E1E1E1;box-sizing:border-box"></div>
<div class="t" style="left:972.15px;top:498.00px;font-size:11px;line-height:13px;color:#000;font-weight:normal;font-family:'Liberation Sans', sans-serif;transform:scaleX(0.9859);transform-origin:0 0;">XML</div>
<div style="left:335px;top:515px;width:743px;height:21px;background:#fff"></div>
<div style="left:315px;top:515px;width:19px;height:21px;background:linear-gradient(#fff,#EDEDED)"></div>
<div style="left:335px;top:536px;width:743px;height:1px;background:#C8C8C8"></div>
<div style="left:315px;top:536px;width:20px;height:1px;background:#808080"></div>
<div style="left:334px;top:515px;width:1px;height:22px;background:#808080"></div>
<div style="left:439px;top:515px;width:1px;height:22px;background:#C8C8C8"></div>
<div style="left:542px;top:515px;width:1px;height:22px;background:#C8C8C8"></div>
<div style="left:645px;top:515px;width:1px;height:22px;background:#C8C8C8"></div>
<div style="left:768px;top:515px;width:1px;height:22px;background:#C8C8C8"></div>
<div style="left:892px;top:515px;width:1px;height:22px;background:#C8C8C8"></div>
<div style="left:958px;top:515px;width:1px;height:22px;background:#C8C8C8"></div>
<div style="left:1077px;top:515px;width:1px;height:22px;background:#C8C8C8"></div>
<div class="t" style="left:337.80px;top:519.00px;font-size:11px;line-height:13px;color:#000;font-weight:normal;font-family:'Liberation Sans', sans-serif;transform:scaleX(0.9380);transform-origin:0 0;">ANDREA</div>
<div class="t" style="left:442.80px;top:519.00px;font-size:11px;line-height:13px;color:#000;font-weight:normal;font-family:'Liberation Sans', sans-serif;transform:scaleX(0.9728);transform-origin:0 0;">Remessa</div>
<div class="t" style="left:545.30px;top:519.00px;font-size:11px;line-height:13px;color:#000;font-weight:normal;font-family:'Liberation Sans', sans-serif;transform:scaleX(0.9659);transform-origin:0 0;">Enviado</div>
<div class="t" style="left:648.80px;top:519.00px;font-size:11px;line-height:13px;color:#000;font-weight:normal;font-family:'Liberation Sans', sans-serif;transform:scaleX(0.9989);transform-origin:0 0;">02/04/2019 11:11:00</div>
<div class="t" style="left:772.00px;top:519.00px;font-size:11px;line-height:13px;color:#000;font-weight:normal;font-family:'Liberation Sans', sans-serif;transform:scaleX(0.9949);transform-origin:0 0;">02/04/2019 11:11:00</div>
<div style="left:962px;top:518px;width:43px;height:18px;border:1px solid #ADADAD;background:#E1E1E1;box-sizing:border-box"></div>
<div class="t" style="left:972.15px;top:520.00px;font-size:11px;line-height:13px;color:#000;font-weight:normal;font-family:'Liberation Sans', sans-serif;transform:scaleX(0.9859);transform-origin:0 0;">XML</div>
<div style="left:335px;top:537px;width:743px;height:21px;background:#fff"></div>
<div style="left:315px;top:537px;width:19px;height:21px;background:linear-gradient(#fff,#EDEDED)"></div>
<div style="left:335px;top:558px;width:743px;height:1px;background:#C8C8C8"></div>
<div style="left:315px;top:558px;width:20px;height:1px;background:#808080"></div>
<div style="left:334px;top:537px;width:1px;height:22px;background:#808080"></div>
<div style="left:439px;top:537px;width:1px;height:22px;background:#C8C8C8"></div>
<div style="left:542px;top:537px;width:1px;height:22px;background:#C8C8C8"></div>
<div style="left:645px;top:537px;width:1px;height:22px;background:#C8C8C8"></div>
<div style="left:768px;top:537px;width:1px;height:22px;background:#C8C8C8"></div>
<div style="left:892px;top:537px;width:1px;height:22px;background:#C8C8C8"></div>
<div style="left:958px;top:537px;width:1px;height:22px;background:#C8C8C8"></div>
<div style="left:1077px;top:537px;width:1px;height:22px;background:#C8C8C8"></div>
<div class="t" style="left:337.80px;top:541.00px;font-size:11px;line-height:13px;color:#000;font-weight:normal;font-family:'Liberation Sans', sans-serif;transform:scaleX(0.9227);transform-origin:0 0;">RBT</div>
<div class="t" style="left:442.80px;top:541.00px;font-size:11px;line-height:13px;color:#000;font-weight:normal;font-family:'Liberation Sans', sans-serif;transform:scaleX(0.9735);transform-origin:0 0;">Retorno</div>
<div class="t" style="left:545.30px;top:541.00px;font-size:11px;line-height:13px;color:#000;font-weight:normal;font-family:'Liberation Sans', sans-serif;transform:scaleX(0.9659);transform-origin:0 0;">Enviado</div>
<div class="t" style="left:648.80px;top:541.00px;font-size:11px;line-height:13px;color:#000;font-weight:normal;font-family:'Liberation Sans', sans-serif;transform:scaleX(0.9908);transform-origin:0 0;">02/04/2019 11:12:00</div>
<div class="t" style="left:772.00px;top:541.00px;font-size:11px;line-height:13px;color:#000;font-weight:normal;font-family:'Liberation Sans', sans-serif;transform:scaleX(0.9868);transform-origin:0 0;">02/04/2019 11:12:00</div>
<div style="left:962px;top:540px;width:43px;height:18px;border:1px solid #ADADAD;background:#E1E1E1;box-sizing:border-box"></div>
<div class="t" style="left:972.15px;top:542.00px;font-size:11px;line-height:13px;color:#000;font-weight:normal;font-family:'Liberation Sans', sans-serif;transform:scaleX(0.9859);transform-origin:0 0;">XML</div>
<div style="left:335px;top:559px;width:743px;height:21px;background:#fff"></div>
<div style="left:315px;top:559px;width:19px;height:21px;background:linear-gradient(#fff,#EDEDED)"></div>
<div style="left:335px;top:580px;width:743px;height:1px;background:#C8C8C8"></div>
<div style="left:315px;top:580px;width:20px;height:1px;background:#808080"></div>
<div style="left:334px;top:559px;width:1px;height:22px;background:#808080"></div>
<div style="left:439px;top:559px;width:1px;height:22px;background:#C8C8C8"></div>
<div style="left:542px;top:559px;width:1px;height:22px;background:#C8C8C8"></div>
<div style="left:645px;top:559px;width:1px;height:22px;background:#C8C8C8"></div>
<div style="left:768px;top:559px;width:1px;height:22px;background:#C8C8C8"></div>
<div style="left:892px;top:559px;width:1px;height:22px;background:#C8C8C8"></div>
<div style="left:958px;top:559px;width:1px;height:22px;background:#C8C8C8"></div>
<div style="left:1077px;top:559px;width:1px;height:22px;background:#C8C8C8"></div>
<div class="t" style="left:337.80px;top:563.00px;font-size:11px;line-height:13px;color:#000;font-weight:normal;font-family:'Liberation Sans', sans-serif;transform:scaleX(0.9380);transform-origin:0 0;">ANDREA</div>
<div class="t" style="left:442.80px;top:563.00px;font-size:11px;line-height:13px;color:#000;font-weight:normal;font-family:'Liberation Sans', sans-serif;transform:scaleX(0.9728);transform-origin:0 0;">Remessa</div>
<div class="t" style="left:545.30px;top:563.00px;font-size:11px;line-height:13px;color:#000;font-weight:normal;font-family:'Liberation Sans', sans-serif;transform:scaleX(0.9659);transform-origin:0 0;">Enviado</div>
<div class="t" style="left:648.80px;top:563.00px;font-size:11px;line-height:13px;color:#000;font-weight:normal;font-family:'Liberation Sans', sans-serif;transform:scaleX(0.9908);transform-origin:0 0;">02/04/2019 11:13:00</div>
<div class="t" style="left:772.00px;top:563.00px;font-size:11px;line-height:13px;color:#000;font-weight:normal;font-family:'Liberation Sans', sans-serif;transform:scaleX(0.9868);transform-origin:0 0;">02/04/2019 11:13:00</div>
<div style="left:962px;top:562px;width:43px;height:18px;border:1px solid #ADADAD;background:#E1E1E1;box-sizing:border-box"></div>
<div class="t" style="left:972.15px;top:564.00px;font-size:11px;line-height:13px;color:#000;font-weight:normal;font-family:'Liberation Sans', sans-serif;transform:scaleX(0.9859);transform-origin:0 0;">XML</div>
<div style="left:335px;top:581px;width:743px;height:21px;background:#fff"></div>
<div style="left:315px;top:581px;width:19px;height:21px;background:linear-gradient(#fff,#EDEDED)"></div>
<div style="left:335px;top:602px;width:743px;height:1px;background:#C8C8C8"></div>
<div style="left:315px;top:602px;width:20px;height:1px;background:#808080"></div>
<div style="left:334px;top:581px;width:1px;height:22px;background:#808080"></div>
<div style="left:439px;top:581px;width:1px;height:22px;background:#C8C8C8"></div>
<div style="left:542px;top:581px;width:1px;height:22px;background:#C8C8C8"></div>
<div style="left:645px;top:581px;width:1px;height:22px;background:#C8C8C8"></div>
<div style="left:768px;top:581px;width:1px;height:22px;background:#C8C8C8"></div>
<div style="left:892px;top:581px;width:1px;height:22px;background:#C8C8C8"></div>
<div style="left:958px;top:581px;width:1px;height:22px;background:#C8C8C8"></div>
<div style="left:1077px;top:581px;width:1px;height:22px;background:#C8C8C8"></div>
<div class="t" style="left:337.80px;top:585.00px;font-size:11px;line-height:13px;color:#000;font-weight:normal;font-family:'Liberation Sans', sans-serif;transform:scaleX(0.9227);transform-origin:0 0;">RBT</div>
<div class="t" style="left:442.80px;top:585.00px;font-size:11px;line-height:13px;color:#000;font-weight:normal;font-family:'Liberation Sans', sans-serif;transform:scaleX(0.9735);transform-origin:0 0;">Retorno</div>
<div class="t" style="left:545.30px;top:585.00px;font-size:11px;line-height:13px;color:#000;font-weight:normal;font-family:'Liberation Sans', sans-serif;transform:scaleX(0.9659);transform-origin:0 0;">Enviado</div>
<div class="t" style="left:648.80px;top:585.00px;font-size:11px;line-height:13px;color:#000;font-weight:normal;font-family:'Liberation Sans', sans-serif;transform:scaleX(0.9908);transform-origin:0 0;">02/04/2019 11:13:58</div>
<div class="t" style="left:772.00px;top:585.00px;font-size:11px;line-height:13px;color:#000;font-weight:normal;font-family:'Liberation Sans', sans-serif;transform:scaleX(0.9868);transform-origin:0 0;">02/04/2019 11:13:54</div>
<div class="t" style="left:895.80px;top:585.00px;font-size:11px;line-height:13px;color:#000;font-weight:normal;font-family:'Liberation Sans', sans-serif;transform:scaleX(0.9970);transform-origin:0 0;">663</div>
<div style="left:962px;top:584px;width:43px;height:18px;border:1px solid #ADADAD;background:#E1E1E1;box-sizing:border-box"></div>
<div class="t" style="left:972.15px;top:586.00px;font-size:11px;line-height:13px;color:#000;font-weight:normal;font-family:'Liberation Sans', sans-serif;transform:scaleX(0.9859);transform-origin:0 0;">XML</div>
<div style="left:335px;top:603px;width:743px;height:21px;background:#fff"></div>
<div style="left:315px;top:603px;width:19px;height:21px;background:linear-gradient(#fff,#EDEDED)"></div>
<div style="left:335px;top:624px;width:743px;height:1px;background:#C8C8C8"></div>
<div style="left:315px;top:624px;width:20px;height:1px;background:#808080"></div>
<div style="left:334px;top:603px;width:1px;height:22px;background:#808080"></div>
<div style="left:439px;top:603px;width:1px;height:22px;background:#C8C8C8"></div>
<div style="left:542px;top:603px;width:1px;height:22px;background:#C8C8C8"></div>
<div style="left:645px;top:603px;width:1px;height:22px;background:#C8C8C8"></div>
<div style="left:768px;top:603px;width:1px;height:22px;background:#C8C8C8"></div>
<div style="left:892px;top:603px;width:1px;height:22px;background:#C8C8C8"></div>
<div style="left:958px;top:603px;width:1px;height:22px;background:#C8C8C8"></div>
<div style="left:1077px;top:603px;width:1px;height:22px;background:#C8C8C8"></div>
<div class="t" style="left:337.80px;top:607.00px;font-size:11px;line-height:13px;color:#000;font-weight:normal;font-family:'Liberation Sans', sans-serif;transform:scaleX(0.9380);transform-origin:0 0;">ANDREA</div>
<div class="t" style="left:442.80px;top:607.00px;font-size:11px;line-height:13px;color:#000;font-weight:normal;font-family:'Liberation Sans', sans-serif;transform:scaleX(0.9728);transform-origin:0 0;">Remessa</div>
<div class="t" style="left:545.30px;top:607.00px;font-size:11px;line-height:13px;color:#000;font-weight:normal;font-family:'Liberation Sans', sans-serif;transform:scaleX(0.9659);transform-origin:0 0;">Enviado</div>
<div class="t" style="left:648.80px;top:607.00px;font-size:11px;line-height:13px;color:#000;font-weight:normal;font-family:'Liberation Sans', sans-serif;transform:scaleX(0.9908);transform-origin:0 0;">02/04/2019 11:14:28</div>
<div class="t" style="left:772.00px;top:607.00px;font-size:11px;line-height:13px;color:#000;font-weight:normal;font-family:'Liberation Sans', sans-serif;transform:scaleX(0.9868);transform-origin:0 0;">02/04/2019 11:14:28</div>
<div class="t" style="left:895.80px;top:607.00px;font-size:11px;line-height:13px;color:#000;font-weight:normal;font-family:'Liberation Sans', sans-serif;transform:scaleX(1.0788);transform-origin:0 0;">0</div>
<div style="left:962px;top:606px;width:43px;height:18px;border:1px solid #ADADAD;background:#E1E1E1;box-sizing:border-box"></div>
<div class="t" style="left:972.15px;top:608.00px;font-size:11px;line-height:13px;color:#000;font-weight:normal;font-family:'Liberation Sans', sans-serif;transform:scaleX(0.9859);transform-origin:0 0;">XML</div>
<div style="left:335px;top:625px;width:743px;height:21px;background:#fff"></div>
<div style="left:315px;top:625px;width:19px;height:21px;background:linear-gradient(#fff,#EDEDED)"></div>
<div style="left:335px;top:646px;width:743px;height:1px;background:#C8C8C8"></div>
<div style="left:315px;top:646px;width:20px;height:1px;background:#808080"></div>
<div style="left:334px;top:625px;width:1px;height:22px;background:#808080"></div>
<div style="left:439px;top:625px;width:1px;height:22px;background:#C8C8C8"></div>
<div style="left:542px;top:625px;width:1px;height:22px;background:#C8C8C8"></div>
<div style="left:645px;top:625px;width:1px;height:22px;background:#C8C8C8"></div>
<div style="left:768px;top:625px;width:1px;height:22px;background:#C8C8C8"></div>
<div style="left:892px;top:625px;width:1px;height:22px;background:#C8C8C8"></div>
<div style="left:958px;top:625px;width:1px;height:22px;background:#C8C8C8"></div>
<div style="left:1077px;top:625px;width:1px;height:22px;background:#C8C8C8"></div>
<div class="t" style="left:337.80px;top:629.00px;font-size:11px;line-height:13px;color:#000;font-weight:normal;font-family:'Liberation Sans', sans-serif;transform:scaleX(0.9227);transform-origin:0 0;">RBT</div>
<div class="t" style="left:442.80px;top:629.00px;font-size:11px;line-height:13px;color:#000;font-weight:normal;font-family:'Liberation Sans', sans-serif;transform:scaleX(0.9735);transform-origin:0 0;">Retorno</div>
<div class="t" style="left:545.30px;top:629.00px;font-size:11px;line-height:13px;color:#000;font-weight:normal;font-family:'Liberation Sans', sans-serif;transform:scaleX(0.9659);transform-origin:0 0;">Enviado</div>
<div class="t" style="left:648.80px;top:629.00px;font-size:11px;line-height:13px;color:#000;font-weight:normal;font-family:'Liberation Sans', sans-serif;transform:scaleX(0.9908);transform-origin:0 0;">02/04/2019 11:14:59</div>
<div class="t" style="left:772.00px;top:629.00px;font-size:11px;line-height:13px;color:#000;font-weight:normal;font-family:'Liberation Sans', sans-serif;transform:scaleX(0.9868);transform-origin:0 0;">02/04/2019 11:14:54</div>
<div class="t" style="left:895.80px;top:629.00px;font-size:11px;line-height:13px;color:#000;font-weight:normal;font-family:'Liberation Sans', sans-serif;transform:scaleX(0.9970);transform-origin:0 0;">663</div>
<div style="left:962px;top:628px;width:43px;height:18px;border:1px solid #ADADAD;background:#E1E1E1;box-sizing:border-box"></div>
<div class="t" style="left:972.15px;top:630.00px;font-size:11px;line-height:13px;color:#000;font-weight:normal;font-family:'Liberation Sans', sans-serif;transform:scaleX(0.9859);transform-origin:0 0;">XML</div>
<div style="left:335px;top:647px;width:743px;height:21px;background:#fff"></div>
<div style="left:315px;top:647px;width:19px;height:21px;background:linear-gradient(#fff,#EDEDED)"></div>
<div style="left:335px;top:668px;width:743px;height:1px;background:#C8C8C8"></div>
<div style="left:315px;top:668px;width:20px;height:1px;background:#808080"></div>
<div style="left:334px;top:647px;width:1px;height:22px;background:#808080"></div>
<div style="left:439px;top:647px;width:1px;height:22px;background:#C8C8C8"></div>
<div style="left:542px;top:647px;width:1px;height:22px;background:#C8C8C8"></div>
<div style="left:645px;top:647px;width:1px;height:22px;background:#C8C8C8"></div>
<div style="left:768px;top:647px;width:1px;height:22px;background:#C8C8C8"></div>
<div style="left:892px;top:647px;width:1px;height:22px;background:#C8C8C8"></div>
<div style="left:958px;top:647px;width:1px;height:22px;background:#C8C8C8"></div>
<div style="left:1077px;top:647px;width:1px;height:22px;background:#C8C8C8"></div>
<div class="t" style="left:337.80px;top:651.00px;font-size:11px;line-height:13px;color:#000;font-weight:normal;font-family:'Liberation Sans', sans-serif;transform:scaleX(0.9842);transform-origin:0 0;">LUANA</div>
<div class="t" style="left:442.80px;top:651.00px;font-size:11px;line-height:13px;color:#000;font-weight:normal;font-family:'Liberation Sans', sans-serif;transform:scaleX(0.9728);transform-origin:0 0;">Remessa</div>
<div class="t" style="left:545.30px;top:651.00px;font-size:11px;line-height:13px;color:#000;font-weight:normal;font-family:'Liberation Sans', sans-serif;transform:scaleX(0.9659);transform-origin:0 0;">Enviado</div>
<div class="t" style="left:648.80px;top:651.00px;font-size:11px;line-height:13px;color:#000;font-weight:normal;font-family:'Liberation Sans', sans-serif;transform:scaleX(0.9908);transform-origin:0 0;">02/04/2019 11:15:55</div>
<div class="t" style="left:772.00px;top:651.00px;font-size:11px;line-height:13px;color:#000;font-weight:normal;font-family:'Liberation Sans', sans-serif;transform:scaleX(0.9868);transform-origin:0 0;">02/04/2019 11:15:55</div>
<div class="t" style="left:895.80px;top:651.00px;font-size:11px;line-height:13px;color:#000;font-weight:normal;font-family:'Liberation Sans', sans-serif;transform:scaleX(1.0788);transform-origin:0 0;">0</div>
<div style="left:962px;top:650px;width:43px;height:18px;border:1px solid #ADADAD;background:#E1E1E1;box-sizing:border-box"></div>
<div class="t" style="left:972.15px;top:652.00px;font-size:11px;line-height:13px;color:#000;font-weight:normal;font-family:'Liberation Sans', sans-serif;transform:scaleX(0.9859);transform-origin:0 0;">XML</div>
<div style="left:335px;top:669px;width:743px;height:21px;background:#fff"></div>
<div style="left:315px;top:669px;width:19px;height:21px;background:linear-gradient(#fff,#EDEDED)"></div>
<div style="left:335px;top:690px;width:743px;height:1px;background:#C8C8C8"></div>
<div style="left:315px;top:690px;width:20px;height:1px;background:#808080"></div>
<div style="left:334px;top:669px;width:1px;height:22px;background:#808080"></div>
<div style="left:439px;top:669px;width:1px;height:22px;background:#C8C8C8"></div>
<div style="left:542px;top:669px;width:1px;height:22px;background:#C8C8C8"></div>
<div style="left:645px;top:669px;width:1px;height:22px;background:#C8C8C8"></div>
<div style="left:768px;top:669px;width:1px;height:22px;background:#C8C8C8"></div>
<div style="left:892px;top:669px;width:1px;height:22px;background:#C8C8C8"></div>
<div style="left:958px;top:669px;width:1px;height:22px;background:#C8C8C8"></div>
<div style="left:1077px;top:669px;width:1px;height:22px;background:#C8C8C8"></div>
<div class="t" style="left:337.80px;top:673.00px;font-size:11px;line-height:13px;color:#000;font-weight:normal;font-family:'Liberation Sans', sans-serif;transform:scaleX(0.9227);transform-origin:0 0;">RBT</div>
<div class="t" style="left:442.80px;top:673.00px;font-size:11px;line-height:13px;color:#000;font-weight:normal;font-family:'Liberation Sans', sans-serif;transform:scaleX(0.9735);transform-origin:0 0;">Retorno</div>
<div class="t" style="left:545.30px;top:673.00px;font-size:11px;line-height:13px;color:#000;font-weight:normal;font-family:'Liberation Sans', sans-serif;transform:scaleX(0.9659);transform-origin:0 0;">Enviado</div>
<div class="t" style="left:648.80px;top:673.00px;font-size:11px;line-height:13px;color:#000;font-weight:normal;font-family:'Liberation Sans', sans-serif;transform:scaleX(0.9908);transform-origin:0 0;">02/04/2019 11:16:59</div>
<div class="t" style="left:772.00px;top:673.00px;font-size:11px;line-height:13px;color:#000;font-weight:normal;font-family:'Liberation Sans', sans-serif;transform:scaleX(0.9868);transform-origin:0 0;">02/04/2019 11:16:09</div>
<div class="t" style="left:895.80px;top:673.00px;font-size:11px;line-height:13px;color:#000;font-weight:normal;font-family:'Liberation Sans', sans-serif;transform:scaleX(0.9970);transform-origin:0 0;">100</div>
<div style="left:962px;top:672px;width:43px;height:18px;border:1px solid #ADADAD;background:#E1E1E1;box-sizing:border-box"></div>
<div class="t" style="left:972.15px;top:674.00px;font-size:11px;line-height:13px;color:#000;font-weight:normal;font-family:'Liberation Sans', sans-serif;transform:scaleX(0.9859);transform-origin:0 0;">XML</div>
<div style="left:335px;top:691px;width:743px;height:21px;background:#fff"></div>
<div style="left:315px;top:691px;width:19px;height:21px;background:linear-gradient(#fff,#EDEDED)"></div>
<div style="left:335px;top:712px;width:743px;height:1px;background:#C8C8C8"></div>
<div style="left:315px;top:712px;width:20px;height:1px;background:#808080"></div>
<div style="left:334px;top:691px;width:1px;height:22px;background:#808080"></div>
<div style="left:439px;top:691px;width:1px;height:22px;background:#C8C8C8"></div>
<div style="left:542px;top:691px;width:1px;height:22px;background:#C8C8C8"></div>
<div style="left:645px;top:691px;width:1px;height:22px;background:#C8C8C8"></div>
<div style="left:768px;top:691px;width:1px;height:22px;background:#C8C8C8"></div>
<div style="left:892px;top:691px;width:1px;height:22px;background:#C8C8C8"></div>
<div style="left:958px;top:691px;width:1px;height:22px;background:#C8C8C8"></div>
<div style="left:1077px;top:691px;width:1px;height:22px;background:#C8C8C8"></div>
<div class="t" style="left:337.80px;top:695.00px;font-size:11px;line-height:13px;color:#000;font-weight:normal;font-family:'Liberation Sans', sans-serif;transform:scaleX(0.9361);transform-origin:0 0;">SOFTRAN</div>
<div class="t" style="left:442.80px;top:695.00px;font-size:11px;line-height:13px;color:#000;font-weight:normal;font-family:'Liberation Sans', sans-serif;transform:scaleX(0.9728);transform-origin:0 0;">Remessa</div>
<div class="t" style="left:545.30px;top:695.00px;font-size:11px;line-height:13px;color:#000;font-weight:normal;font-family:'Liberation Sans', sans-serif;transform:scaleX(0.9659);transform-origin:0 0;">Enviado</div>
<div class="t" style="left:648.80px;top:695.00px;font-size:11px;line-height:13px;color:#000;font-weight:normal;font-family:'Liberation Sans', sans-serif;transform:scaleX(0.9828);transform-origin:0 0;">22/05/2019 17:41:25</div>
<div class="t" style="left:772.00px;top:695.00px;font-size:11px;line-height:13px;color:#000;font-weight:normal;font-family:'Liberation Sans', sans-serif;transform:scaleX(0.9788);transform-origin:0 0;">22/05/2019 17:41:25</div>
<div class="t" style="left:895.80px;top:695.00px;font-size:11px;line-height:13px;color:#000;font-weight:normal;font-family:'Liberation Sans', sans-serif;transform:scaleX(1.0788);transform-origin:0 0;">0</div>
<div style="left:962px;top:694px;width:43px;height:18px;border:1px solid #ADADAD;background:#E1E1E1;box-sizing:border-box"></div>
<div class="t" style="left:971.55px;top:696.00px;font-size:11px;line-height:13px;color:#000;font-weight:bold;font-family:'Liberation Sans', sans-serif;transform:scaleX(1.0121);transform-origin:0 0;">XML</div>
<svg style="position:absolute;left:317px;top:472px;" width="8" height="12" viewBox="0 0 8 12"><path d="M1 0.3 L7 5.6 L1 11.2Z" fill="#000"/></svg>
<div class="t" style="left:337.80px;top:453.00px;font-size:11px;line-height:13px;color:#000;font-weight:normal;font-family:'Liberation Sans', sans-serif;transform:scaleX(0.9866);transform-origin:0 0;">Usuário</div>
<div class="t" style="left:442.50px;top:453.00px;font-size:11px;line-height:13px;color:#000;font-weight:normal;font-family:'Liberation Sans', sans-serif;transform:scaleX(0.9867);transform-origin:0 0;">Tipo Operação</div>
<div class="t" style="left:545.50px;top:453.00px;font-size:11px;line-height:13px;color:#000;font-weight:normal;font-family:'Liberation Sans', sans-serif;transform:scaleX(0.9795);transform-origin:0 0;">Tipo Evento</div>
<div class="t" style="left:648.80px;top:453.00px;font-size:11px;line-height:13px;color:#000;font-weight:normal;font-family:'Liberation Sans', sans-serif;transform:scaleX(0.9597);transform-origin:0 0;">Data Recibo</div>
<div class="t" style="left:772.00px;top:453.00px;font-size:11px;line-height:13px;color:#000;font-weight:normal;font-family:'Liberation Sans', sans-serif;transform:scaleX(0.9750);transform-origin:0 0;">Data Retorno</div>
<div class="t" style="left:895.80px;top:453.00px;font-size:11px;line-height:13px;color:#000;font-weight:normal;font-family:'Liberation Sans', sans-serif;transform:scaleX(0.9750);transform-origin:0 0;">Status</div>
<div class="t" style="left:961.50px;top:453.00px;font-size:11px;line-height:13px;color:#000;font-weight:normal;font-family:'Liberation Sans', sans-serif;transform:scaleX(0.9750);transform-origin:0 0;">XML</div>
<div style="left:714px;top:411px;width:495px;height:174px;box-shadow:0 -1px 12px 3px rgba(0,0,0,0.06)"></div>
<div style="left:718px;top:413px;width:484px;height:168px;background:#fff;border:1px solid #A8A8A8;box-shadow:2px 2px 6px rgba(0,0,0,0.28);box-sizing:border-box"></div>
<div class="t" style="left:722.20px;top:419.00px;font-size:12px;line-height:14px;color:#9A93A8;font-weight:normal;font-family:'Liberation Sans', sans-serif;transform:scaleX(1.0037);transform-origin:0 0;">Informação!</div>
<svg style="position:absolute;left:1180px;top:420px;" width="12" height="12" viewBox="0 0 12 12"><path d="M1 1 L11 11 M11 1 L1 11" stroke="#707070" stroke-width="1"/></svg>
<svg style="position:absolute;left:726px;top:446px;" width="34" height="34" viewBox="0 0 34 34"><defs><linearGradient id="ig" x1="0.2" y1="0" x2="0.8" y2="1"><stop offset="0" stop-color="#6A9BF0"/><stop offset="0.45" stop-color="#2D57C4"/><stop offset="0.5" stop-color="#2246B4"/><stop offset="1" stop-color="#2242C8"/></linearGradient><linearGradient id="is" x1="0" y1="0" x2="1" y2="0"><stop offset="0" stop-color="#F4F4F4"/><stop offset="0.5" stop-color="#BDBDBD"/><stop offset="1" stop-color="#F4F4F4"/></linearGradient></defs><circle cx="17" cy="16.7" r="15.8" fill="#fff" stroke="#7A7A7A" stroke-width="1"/><circle cx="17" cy="16.7" r="13.8" fill="#8C8C8C"/><circle cx="17" cy="16.7" r="13.2" fill="url(#ig)"/><circle cx="17" cy="8.4" r="2.2" fill="#fff"/><rect x="14.9" y="13" width="4.2" height="14.2" rx="1.4" fill="url(#is)" stroke="#fff" stroke-width="0.5"/></svg>
<div class="t" style="left:776.50px;top:462.00px;font-size:11px;line-height:13px;color:#000;font-weight:normal;font-family:'Liberation Sans', sans-serif;">Arquivo enviado com Sucesso !</div>
<div style="left:730px;top:549px;width:73px;height:23px;border:2px solid #0A78D6;background:#E1E1E1;box-sizing:border-box"></div>
<div class="t" style="left:758.75px;top:555.00px;font-size:11px;line-height:13px;color:#000;font-weight:normal;font-family:'Liberation Sans', sans-serif;transform:scaleX(0.9750);transform-origin:0 0;">OK</div>
<div class="t" style="left:1145.80px;top:557.00px;font-size:11px;line-height:13px;color:#000;font-weight:normal;font-family:'Liberation Sans', sans-serif;transform:scaleX(0.9671);transform-origin:0 0;">SOFtran</div>
<div style="left:712px;top:409px;width:499px;height:178px;border:3px solid #F00;border-radius:2px;box-sizing:border-box"></div>
</body></html>
